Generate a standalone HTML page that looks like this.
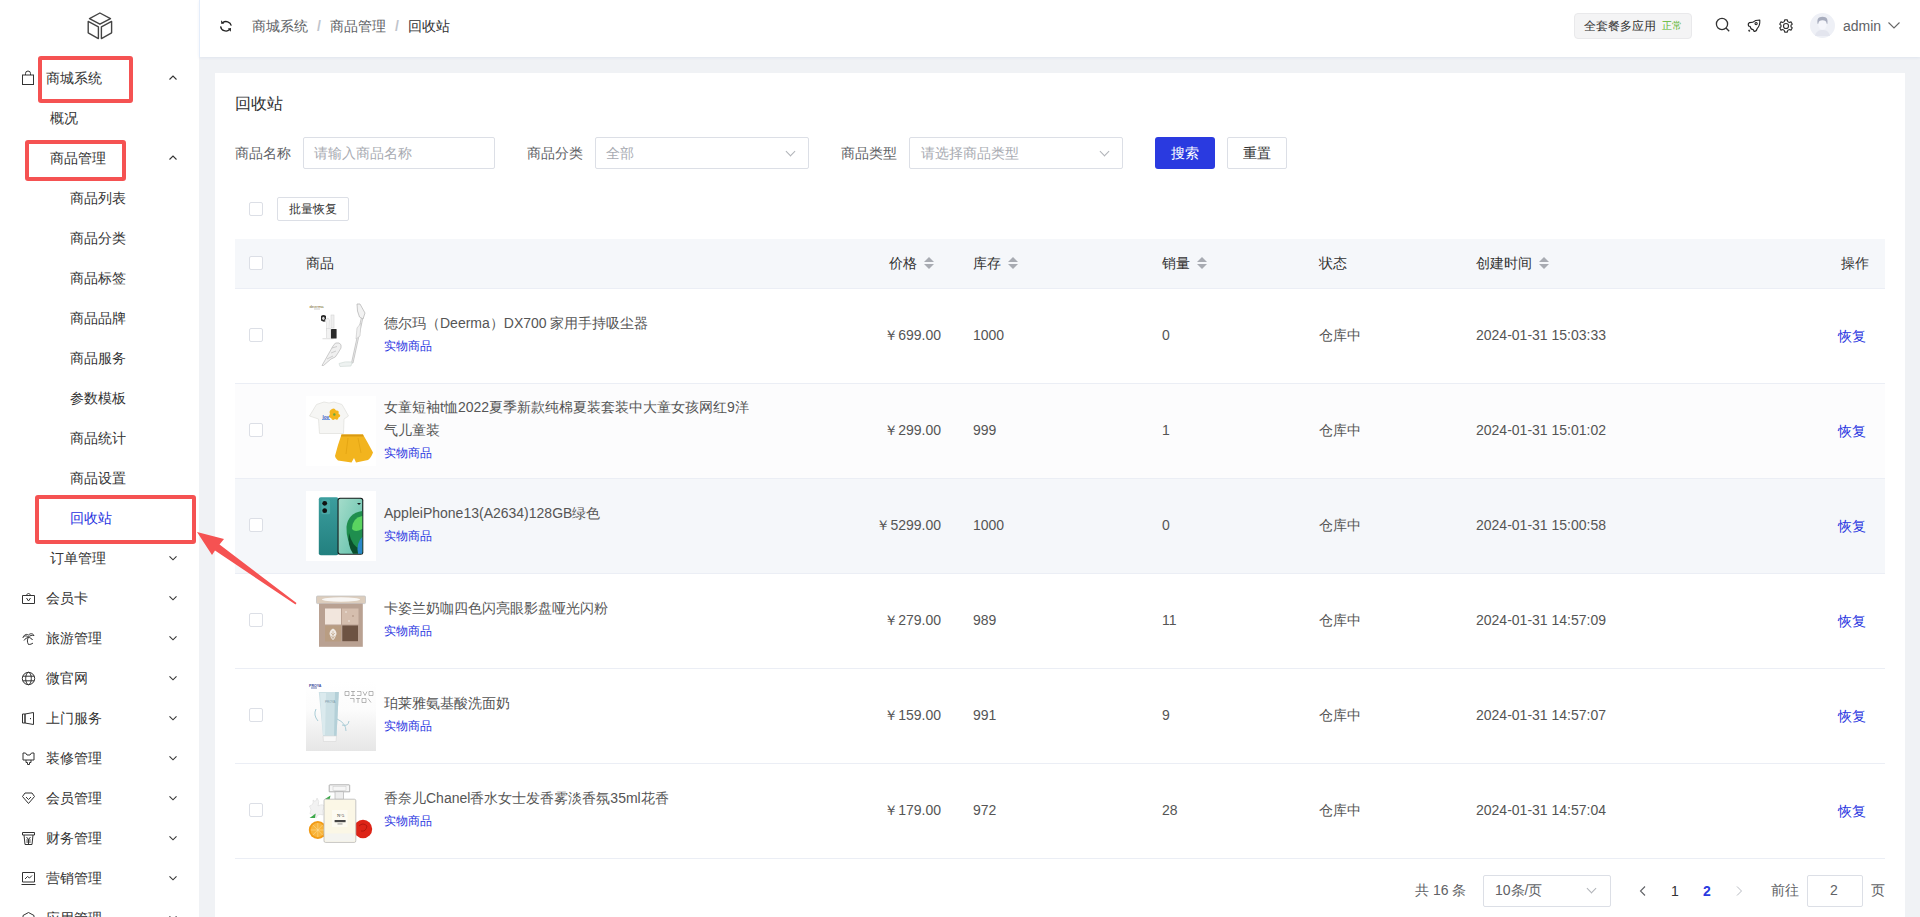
<!DOCTYPE html><html><head><meta charset="utf-8"><style>
*{box-sizing:border-box;margin:0;padding:0}
html,body{width:1920px;height:917px;overflow:hidden;background:#f0f2f5;font-family:"Liberation Sans",sans-serif;font-size:14px;color:#333}
#side{position:absolute;left:0;top:0;width:199px;height:917px;background:#fff}
.t{position:absolute;white-space:nowrap;line-height:20px;height:20px}
.chev{position:absolute;width:6px;height:6px;border-left:1px solid #555;border-top:1px solid #555}
.up{transform:rotate(45deg)}
.down{transform:rotate(225deg)}
#hdr{position:absolute;left:199px;top:0;width:1721px;height:57px;background:#fff;border-left:1px solid #e4edfa;box-shadow:0 1px 3px rgba(0,50,150,0.07)}
#card{position:absolute;left:215px;top:73px;width:1690px;height:860px;background:#fff}
.red{position:absolute;border:4px solid #f55252;border-radius:3px}
svg{position:absolute;overflow:visible}
.box{position:absolute;border:1px solid #dcdfe6;border-radius:2px;background:#fff}
.cb{position:absolute;width:14px;height:14px;border:1px solid #dcdfe6;border-radius:2px;background:#fff}
.row{position:absolute;left:235px;width:1650px}
.hl{position:absolute;left:235px;width:1650px;height:1px;background:#ebeef5}
.sel-ch{position:absolute;width:7px;height:7px;border-left:1px solid #b0b3b8;border-top:1px solid #b0b3b8;transform:rotate(225deg)}
.sort{position:absolute;width:10px;height:14px}
.sort:before{content:"";position:absolute;left:0;top:1px;border:5px solid transparent;border-bottom:5px solid #a8abb2;border-top:0}
.sort:after{content:"";position:absolute;left:0;top:8px;border:5px solid transparent;border-top:5px solid #a8abb2;border-bottom:0}
</style></head><body><div id="side"></div><svg style="left:82px;top:8px" width="36" height="36" viewBox="0 0 36 36"><g fill="none" stroke="#444" stroke-width="1.4" stroke-linejoin="round"><path d="M7.5 10.6 L17.9 5 L28.5 10.6 L17.9 16.2 Z"/><path d="M6.2 13.4 L16.4 18.9 V30.6 L6.2 24.8 Z"/><path d="M29.6 13.4 L19.4 18.9 V30.6 L29.6 24.8 Z"/></g></svg><div class="t" style="left:46px;top:68px;color:#333;font-size:14px;">商城系统</div><svg style="left:168px;top:74px" width="10" height="8" viewBox="0 0 10 8"><path d="M1.5 5.5 L5 2 L8.5 5.5" fill="none" stroke="#333" stroke-width="1.1"/></svg><svg style="left:21px;top:70px" width="14" height="16" viewBox="0 0 14 16"><g fill="none" stroke="#333" stroke-width="1"><rect x="1.5" y="5" width="11" height="9.5"/><path d="M4.5 5 V3.5 A2.5 2.5 0 0 1 9.5 3.5 V5"/></g></svg><div class="t" style="left:50px;top:108px;color:#333;font-size:14px;">概况</div><div class="t" style="left:50px;top:148px;color:#333;font-size:14px;">商品管理</div><svg style="left:168px;top:154px" width="10" height="8" viewBox="0 0 10 8"><path d="M1.5 5.5 L5 2 L8.5 5.5" fill="none" stroke="#333" stroke-width="1.1"/></svg><div class="t" style="left:70px;top:188px;color:#333;font-size:14px;">商品列表</div><div class="t" style="left:70px;top:228px;color:#333;font-size:14px;">商品分类</div><div class="t" style="left:70px;top:268px;color:#333;font-size:14px;">商品标签</div><div class="t" style="left:70px;top:308px;color:#333;font-size:14px;">商品品牌</div><div class="t" style="left:70px;top:348px;color:#333;font-size:14px;">商品服务</div><div class="t" style="left:70px;top:388px;color:#333;font-size:14px;">参数模板</div><div class="t" style="left:70px;top:428px;color:#333;font-size:14px;">商品统计</div><div class="t" style="left:70px;top:468px;color:#333;font-size:14px;">商品设置</div><div class="t" style="left:70px;top:508px;color:#1f33e0;font-size:14px;">回收站</div><div class="t" style="left:50px;top:548px;color:#333;font-size:14px;">订单管理</div><svg style="left:168px;top:554px" width="10" height="8" viewBox="0 0 10 8"><path d="M1.5 2.3 L5 5.8 L8.5 2.3" fill="none" stroke="#333" stroke-width="1.1"/></svg><div class="t" style="left:46px;top:588px;color:#333;font-size:14px;">会员卡</div><svg style="left:168px;top:594px" width="10" height="8" viewBox="0 0 10 8"><path d="M1.5 2.3 L5 5.8 L8.5 2.3" fill="none" stroke="#333" stroke-width="1.1"/></svg><div class="t" style="left:46px;top:628px;color:#333;font-size:14px;">旅游管理</div><svg style="left:168px;top:634px" width="10" height="8" viewBox="0 0 10 8"><path d="M1.5 2.3 L5 5.8 L8.5 2.3" fill="none" stroke="#333" stroke-width="1.1"/></svg><div class="t" style="left:46px;top:668px;color:#333;font-size:14px;">微官网</div><svg style="left:168px;top:674px" width="10" height="8" viewBox="0 0 10 8"><path d="M1.5 2.3 L5 5.8 L8.5 2.3" fill="none" stroke="#333" stroke-width="1.1"/></svg><div class="t" style="left:46px;top:708px;color:#333;font-size:14px;">上门服务</div><svg style="left:168px;top:714px" width="10" height="8" viewBox="0 0 10 8"><path d="M1.5 2.3 L5 5.8 L8.5 2.3" fill="none" stroke="#333" stroke-width="1.1"/></svg><div class="t" style="left:46px;top:748px;color:#333;font-size:14px;">装修管理</div><svg style="left:168px;top:754px" width="10" height="8" viewBox="0 0 10 8"><path d="M1.5 2.3 L5 5.8 L8.5 2.3" fill="none" stroke="#333" stroke-width="1.1"/></svg><div class="t" style="left:46px;top:788px;color:#333;font-size:14px;">会员管理</div><svg style="left:168px;top:794px" width="10" height="8" viewBox="0 0 10 8"><path d="M1.5 2.3 L5 5.8 L8.5 2.3" fill="none" stroke="#333" stroke-width="1.1"/></svg><div class="t" style="left:46px;top:828px;color:#333;font-size:14px;">财务管理</div><svg style="left:168px;top:834px" width="10" height="8" viewBox="0 0 10 8"><path d="M1.5 2.3 L5 5.8 L8.5 2.3" fill="none" stroke="#333" stroke-width="1.1"/></svg><div class="t" style="left:46px;top:868px;color:#333;font-size:14px;">营销管理</div><svg style="left:168px;top:874px" width="10" height="8" viewBox="0 0 10 8"><path d="M1.5 2.3 L5 5.8 L8.5 2.3" fill="none" stroke="#333" stroke-width="1.1"/></svg><div class="t" style="left:46px;top:908px;color:#333;font-size:14px;">应用管理</div><svg style="left:168px;top:914px" width="10" height="8" viewBox="0 0 10 8"><path d="M1.5 2.3 L5 5.8 L8.5 2.3" fill="none" stroke="#333" stroke-width="1.1"/></svg><svg style="left:20.5px;top:590.5px" width="15" height="15" viewBox="0 0 15 15"><g fill="none" stroke="#333" stroke-width="1" stroke-linejoin="round"><path d="M1.5 4.5 H13.5 V12.5 H1.5 Z M5 4.5 L7.5 2 L10 4.5 M5.5 7 L7.5 10 L9.5 7"/></g></svg><svg style="left:20.5px;top:630.5px" width="15" height="15" viewBox="0 0 15 15"><g fill="none" stroke="#333" stroke-width="1" stroke-linejoin="round"><path d="M7.5 6 C6 9 6 11 7.5 13.5 C9 13.5 11 13 12 12 M7.5 6 C5 4 3 5 2 6.5 C3 4 5 2.5 7.5 4 C9.5 2 12 2.5 13 4.5 C11 4 9 4.5 7.5 6 M7.5 6 C9 7 11 7.5 11.5 9 M7.5 6 C6 7 4 7.5 3 9.5"/></g></svg><svg style="left:20.5px;top:670.5px" width="15" height="15" viewBox="0 0 15 15"><g fill="none" stroke="#333" stroke-width="1" stroke-linejoin="round"><circle cx="7.5" cy="7.5" r="6.2"/><ellipse cx="7.5" cy="7.5" rx="2.8" ry="6.2"/><path d="M1.8 5.2 H13.2 M1.8 9.8 H13.2"/></g></svg><svg style="left:20.5px;top:710.5px" width="15" height="15" viewBox="0 0 15 15"><g fill="none" stroke="#333" stroke-width="1" stroke-linejoin="round"><path d="M4 3 L12.5 1.5 V13.5 L4 12 M4 3 H1.5 V12 H4 Z M4 3 V12 M9.5 7 V8.2"/></g></svg><svg style="left:20.5px;top:750.5px" width="15" height="15" viewBox="0 0 15 15"><g fill="none" stroke="#333" stroke-width="1" stroke-linejoin="round"><path d="M2 2 H4.5 L6 4 H9 L10.5 2 H13 V9 H2 Z M5 9 V11.5 H6.5 V13.5 H8.5 V11.5 H10 V9"/></g></svg><svg style="left:20.5px;top:790.5px" width="15" height="15" viewBox="0 0 15 15"><g fill="none" stroke="#333" stroke-width="1" stroke-linejoin="round"><path d="M4 2 H11 L13.5 5.5 L7.5 12.5 L1.5 5.5 Z M5 6 L7.5 8.5 L10 6"/></g></svg><svg style="left:20.5px;top:830.5px" width="15" height="15" viewBox="0 0 15 15"><g fill="none" stroke="#333" stroke-width="1" stroke-linejoin="round"><path d="M1.5 1.5 H13.5 V4 H1.5 Z M3 4 L4 13.5 H11 L12 4 M5.5 6 L7.5 8.5 L9.5 6 M5.3 9 H9.7 M5.3 11 H9.7 M7.5 8.5 V13"/></g></svg><svg style="left:20.5px;top:870.5px" width="15" height="15" viewBox="0 0 15 15"><g fill="none" stroke="#333" stroke-width="1" stroke-linejoin="round"><path d="M1.5 1.5 H13.5 V11 H1.5 Z M0.5 13.5 H14.5 M4 8 L6.5 5.5 L8.5 7 L11 4.5"/></g></svg><svg style="left:20.5px;top:910.5px" width="15" height="15" viewBox="0 0 15 15"><g fill="none" stroke="#333" stroke-width="1" stroke-linejoin="round"><path d="M7.5 1.5 L13 4.5 V10.5 L7.5 13.5 L2 10.5 V4.5 Z"/></g></svg><div id="hdr"></div><svg style="left:214px;top:14px" width="24" height="24" viewBox="0 0 24 24"><g fill="none" stroke="#222" stroke-width="1.3"><path d="M8.6 8.8 A5.4 5.4 0 0 1 17.3 11.6"/><path d="M6.6 12.3 A5.4 5.4 0 0 0 15.6 15.6"/></g><path d="M7 6.2 L7.3 9.9 L10.2 9.4 Z M17 14.1 L16.8 17.7 L13.9 14.5 Z" fill="#222"/></svg><div class="t" style="left:252px;top:16px;color:#606266;font-size:14px;">商城系统</div><div class="t" style="left:317px;top:16px;color:#c0c4cc;font-size:14px;font-weight:bold">/</div><div class="t" style="left:330px;top:16px;color:#606266;font-size:14px;">商品管理</div><div class="t" style="left:395px;top:16px;color:#c0c4cc;font-size:14px;font-weight:bold">/</div><div class="t" style="left:408px;top:16px;color:#303133;font-size:14px;">回收站</div><div style="position:absolute;left:1574px;top:13px;width:118px;height:26px;background:#f4f4f5;border:1px solid #e9e9eb;border-radius:4px"></div><div class="t" style="left:1584px;top:16px;color:#333;font-size:12px;">全套餐多应用</div><div class="t" style="left:1662px;top:16px;color:#58b52a;font-size:10px;">正常</div><svg style="left:1715px;top:17px" width="16" height="16" viewBox="0 0 16 16"><g fill="none" stroke="#333" stroke-width="1.3"><circle cx="7" cy="7" r="5.6"/><path d="M11 11 L14.2 14.2"/></g></svg><svg style="left:1740px;top:12px" width="30" height="28" viewBox="0 0 30 28"><g fill="none" stroke="#222" stroke-width="1.1" stroke-linejoin="round"><path d="M19.8 8 C17 8 14.5 8.6 12.6 10.3 L9.6 10.6 C8.4 11.2 8.1 12.8 8.5 13.9 L10.2 14.6 C10.4 16.4 11.6 17.4 13.4 17.7 L14 19.4 C15.5 19.5 16.8 18.2 17.1 16.6 C19.2 14.6 20 11.2 19.8 8 Z"/><circle cx="16.1" cy="11.6" r="1.1"/><path d="M8.2 18.6 L10.2 18.8 M9.2 17.6 L9.3 19.8" stroke-width="0.8"/></g></svg><svg style="left:1779px;top:19px" width="14" height="14" viewBox="0 0 16 16"><g fill="none" stroke="#333" stroke-width="1.3" stroke-linejoin="round"><path d="M6.5 1 H9.5 L10 3 L11.8 4 L13.7 3.3 L15.2 5.9 L13.7 7.2 V8.8 L15.2 10.1 L13.7 12.7 L11.8 12 L10 13 L9.5 15 H6.5 L6 13 L4.2 12 L2.3 12.7 L0.8 10.1 L2.3 8.8 V7.2 L0.8 5.9 L2.3 3.3 L4.2 4 L6 3 Z"/><circle cx="8" cy="8" r="2.9"/></g></svg><svg style="left:1810px;top:13px" width="25" height="25" viewBox="0 0 25 25"><circle cx="12.5" cy="12.5" r="12.5" fill="#eef0f6"/><path d="M5 23 C6 18 9 17 12.5 17 C16 17 19 18 20 23 Z" fill="#e3e5ee"/><ellipse cx="12.5" cy="11.5" rx="4.2" ry="5.2" fill="#f5f6fb"/><path d="M7.6 11 C7 6 8 4 12.5 3.8 C17 4 18 6 17.4 11 L16.6 10.5 C16.5 8 15 7.3 12.5 7.3 C10 7.3 8.5 8 8.4 10.5 Z" fill="#a7acbd"/></svg><div class="t" style="left:1843px;top:16px;color:#606266;font-size:14px;">admin</div><svg style="left:1888px;top:22px" width="12" height="7" viewBox="0 0 12 7"><path d="M0.5 0.5 L6 6 L11.5 0.5" fill="none" stroke="#666" stroke-width="1.1"/></svg><div id="card"></div><div class="t" style="left:235px;top:94px;color:#303133;font-size:16px;">回收站</div><div class="t" style="left:235px;top:143px;color:#606266;font-size:14px;">商品名称</div><div class="box" style="left:303px;top:137px;width:192px;height:32px"></div><div class="t" style="left:314px;top:143px;color:#a8abb2;font-size:14px;">请输入商品名称</div><div class="t" style="left:527px;top:143px;color:#606266;font-size:14px;">商品分类</div><div class="box" style="left:595px;top:137px;width:214px;height:32px"></div><div class="t" style="left:606px;top:143px;color:#a8abb2;font-size:14px;">全部</div><div class="sel-ch" style="left:787px;top:148px"></div><div class="t" style="left:841px;top:143px;color:#606266;font-size:14px;">商品类型</div><div class="box" style="left:909px;top:137px;width:214px;height:32px"></div><div class="t" style="left:921px;top:143px;color:#a8abb2;font-size:14px;">请选择商品类型</div><div class="sel-ch" style="left:1101px;top:148px"></div><div style="position:absolute;left:1155px;top:137px;width:60px;height:32px;background:#2a3ae0;border-radius:3px"></div><div class="t" style="left:1171px;top:143px;color:#fff;font-size:14px;">搜索</div><div class="box" style="left:1227px;top:137px;width:60px;height:32px"></div><div class="t" style="left:1243px;top:143px;color:#333;font-size:14px;">重置</div><div class="cb" style="left:249px;top:202px"></div><div class="box" style="left:277px;top:197px;width:72px;height:24px"></div><div class="t" style="left:289px;top:199px;color:#333;font-size:12px;">批量恢复</div><div style="position:absolute;left:235px;top:239px;width:1650px;height:50px;background:#f5f7fa;border-bottom:1px solid #ebeef5"></div><div class="cb" style="left:249px;top:256px"></div><div class="t" style="left:306px;top:253px;color:#333;font-size:14px;">商品</div><div class="t" style="left:889px;top:253px;color:#333;font-size:14px;">价格</div><div class="sort" style="left:924px;top:256px"></div><div class="t" style="left:973px;top:253px;color:#333;font-size:14px;">库存</div><div class="sort" style="left:1008px;top:256px"></div><div class="t" style="left:1162px;top:253px;color:#333;font-size:14px;">销量</div><div class="sort" style="left:1197px;top:256px"></div><div class="t" style="left:1319px;top:253px;color:#333;font-size:14px;">状态</div><div class="t" style="left:1476px;top:253px;color:#333;font-size:14px;">创建时间</div><div class="sort" style="left:1539px;top:256px"></div><div class="t" style="left:1469px;width:400px;text-align:right;top:253px;color:#333;font-size:14px;">操作</div><div class="row" style="top:289px;height:94px;background:#fff"></div><div class="hl" style="top:383px"></div><div class="cb" style="left:249px;top:328px"></div><div style="position:absolute;left:306px;top:301px;width:70px;height:70px;background:#fff;overflow:hidden"><svg width="70" height="70" viewBox="0 0 70 70" style="left:0;top:0">
<text x="3.5" y="6.5" font-size="4.2" fill="#7a6a30" font-family="Liberation Sans">deerma</text>
<rect x="8" y="7.5" width="6" height="1" fill="#ccc"/>
<path d="M15 15 Q17.5 13 20 15 L20 20 Q17.5 21.5 15 19.5 Z" fill="#2a2a2a"/>
<ellipse cx="17.4" cy="17.3" rx="1.2" ry="1.6" fill="#ddd"/>
<path d="M19 19 L22 17 L23.5 19 L23 30 L20.5 30 L20.5 22 Z" fill="#f4f4f4" stroke="#d8d8d8" stroke-width="0.6"/>
<rect x="25" y="14" width="3" height="13" fill="#efefef" stroke="#d4d4d4" stroke-width="0.6"/>
<rect x="20.5" y="27.5" width="4" height="10" fill="#f2f2f2" stroke="#d6d6d6" stroke-width="0.6"/>
<rect x="16.5" y="37" width="11" height="1.3" fill="#e4e4e4"/>
<rect x="25" y="28" width="5.6" height="9.6" rx="0.6" fill="#2a2a2a"/>
<path d="M16 64.5 L27 45 Q29 40.5 33 42 Q36 43 35 47 L32 52 Q30 57 25 58 L17.5 64.5 Z" fill="#f0f0f0" stroke="#b8b8b8" stroke-width="0.7"/>
<path d="M26 47 L31 45.5 M25 52 L30 50 M21 58 L27 55" stroke="#bdbdbd" stroke-width="0.7"/>
<path d="M55.5 16 L57 16.5 L47 62 L45.5 62 Z" fill="#ececec" stroke="#b8b8b8" stroke-width="0.7"/>
<path d="M51 3 L54 3 L59 12 L57 18 L53.5 16 L51.5 10 Z" fill="#f2f2f2" stroke="#b0b0b0" stroke-width="0.7"/>
<path d="M51 27 L55 22 L54 35 L50 38 Z" fill="#f0f0f0" stroke="#c4c4c4" stroke-width="0.6"/>
<path d="M33 62.5 Q39 60 46 61 L45 65 L34 65.5 Z" fill="#eef2f1" stroke="#cdd6d4" stroke-width="0.6"/>
</svg></div><div class="t" style="left:384px;top:313px;color:#555;font-size:14px;">德尔玛（Deerma）DX700 家用手持吸尘器</div><div class="t" style="left:384px;top:336px;color:#1f33e0;font-size:12px;">实物商品</div><div class="t" style="left:541px;width:400px;text-align:right;top:325px;color:#555;font-size:14px;">￥699.00</div><div class="t" style="left:973px;top:325px;color:#555;font-size:14px;">1000</div><div class="t" style="left:1162px;top:325px;color:#555;font-size:14px;">0</div><div class="t" style="left:1319px;top:325px;color:#555;font-size:14px;">仓库中</div><div class="t" style="left:1476px;top:325px;color:#555;font-size:14px;">2024-01-31 15:03:33</div><div class="t" style="left:1838px;top:326px;color:#1f33e0;font-size:14px;">恢复</div><div class="row" style="top:384px;height:94px;background:#fcfcfd"></div><div class="hl" style="top:478px"></div><div class="cb" style="left:249px;top:423px"></div><div style="position:absolute;left:306px;top:396px;width:70px;height:70px;background:#fff;overflow:hidden"><svg width="70" height="70" viewBox="0 0 70 70" style="left:0;top:0">
<path d="M18 6 Q23 8 28 6 L36 8.5 L42.5 20 L38 23 L37.5 37.5 L13.5 37.5 L12.5 23 L3.5 20 L10.5 8.5 Z" fill="#f6f6f4" stroke="#e2e2de" stroke-width="0.8"/>
<path d="M26 13 Q28.5 11.5 30 14.5 Q33.5 14 32.5 17.5 Q36 20 32.5 21.5 Q32 25 29 23 Q26.5 25.5 25 22 Q21.5 21 24 18 Q22.5 14.5 26 13 Z" fill="#f3b51c"/>
<circle cx="28.3" cy="18.5" r="1.2" fill="#6aa840"/>
<text x="16.5" y="22.5" font-size="4.6" fill="#3650c0" font-family="Liberation Sans" font-weight="bold">lov</text>
<rect x="16" y="23" width="8" height="1" fill="#7aa0e0"/>
<path d="M35.5 38.5 L57 38.5 Q62 47 67 56.5 Q65 62 62 64 L50 66.5 L48 62 L45.5 66.5 L32 64.5 Q29 62 29 60 Q32 48 35.5 38.5 Z" fill="#f2b41e"/>
<path d="M35.5 38.5 L57 38.5 L57.5 40.5 L35 40.5 Z" fill="#d99a12"/>
<path d="M42 42 L40 58 M52 42 L55 57" stroke="#e0a010" stroke-width="0.7"/>
</svg></div><div class="t" style="left:384px;top:397px;color:#555;font-size:14px;">女童短袖t恤2022夏季新款纯棉夏装套装中大童女孩网红9洋</div><div class="t" style="left:384px;top:420px;color:#555;font-size:14px;">气儿童装</div><div class="t" style="left:384px;top:443px;color:#1f33e0;font-size:12px;">实物商品</div><div class="t" style="left:541px;width:400px;text-align:right;top:420px;color:#555;font-size:14px;">￥299.00</div><div class="t" style="left:973px;top:420px;color:#555;font-size:14px;">999</div><div class="t" style="left:1162px;top:420px;color:#555;font-size:14px;">1</div><div class="t" style="left:1319px;top:420px;color:#555;font-size:14px;">仓库中</div><div class="t" style="left:1476px;top:420px;color:#555;font-size:14px;">2024-01-31 15:01:02</div><div class="t" style="left:1838px;top:421px;color:#1f33e0;font-size:14px;">恢复</div><div class="row" style="top:479px;height:94px;background:#f5f7fa"></div><div class="hl" style="top:573px"></div><div class="cb" style="left:249px;top:518px"></div><div style="position:absolute;left:306px;top:491px;width:70px;height:70px;background:#fff;overflow:hidden"><svg width="70" height="70" viewBox="0 0 70 70" style="left:0;top:0">
<defs><linearGradient id="pb" x1="0" y1="0" x2="0" y2="1"><stop offset="0" stop-color="#3c9e9e"/><stop offset="1" stop-color="#22807f"/></linearGradient>
<linearGradient id="ps" x1="0" y1="0" x2="1" y2="1"><stop offset="0" stop-color="#a4dcca"/><stop offset="1" stop-color="#60c0aa"/></linearGradient></defs>
<rect x="12.8" y="6.2" width="19.6" height="58" rx="2" fill="url(#pb)"/>
<rect x="15.4" y="8.4" width="8.7" height="14.8" rx="1.5" fill="#4aa8a6"/>
<circle cx="18.7" cy="12.3" r="2.4" fill="#111"/>
<circle cx="18.7" cy="19.7" r="2.4" fill="#111"/>
<rect x="31.5" y="6.7" width="25.8" height="57.1" rx="2.5" fill="#151a1a"/>
<rect x="32.6" y="7.8" width="23.6" height="54.9" rx="1.8" fill="url(#ps)"/>
<path d="M56.2 20 Q42 22 40.5 36 Q40 50 48 60 L56.2 62 Z" fill="#1f8e4e"/>
<path d="M56.2 25 Q46 27 46 38 Q49 42 56.2 38 Z" fill="#5ad460"/>
<path d="M43 42 Q46 55 54 58 L56.2 62.7 L47 62.7 Q41 54 43 42 Z" fill="#0b4f2c"/>
<path d="M56.2 46 Q50 52 52 62.7 L56.2 62.7 Z" fill="#2a88c8"/>
<path d="M51 12 L55 12 L53 14 Z" fill="#151a1a"/>
</svg></div><div class="t" style="left:384px;top:503px;color:#555;font-size:14px;">AppleiPhone13(A2634)128GB绿色</div><div class="t" style="left:384px;top:526px;color:#1f33e0;font-size:12px;">实物商品</div><div class="t" style="left:541px;width:400px;text-align:right;top:515px;color:#555;font-size:14px;">￥5299.00</div><div class="t" style="left:973px;top:515px;color:#555;font-size:14px;">1000</div><div class="t" style="left:1162px;top:515px;color:#555;font-size:14px;">0</div><div class="t" style="left:1319px;top:515px;color:#555;font-size:14px;">仓库中</div><div class="t" style="left:1476px;top:515px;color:#555;font-size:14px;">2024-01-31 15:00:58</div><div class="t" style="left:1838px;top:516px;color:#1f33e0;font-size:14px;">恢复</div><div class="row" style="top:574px;height:94px;background:#fff"></div><div class="hl" style="top:668px"></div><div class="cb" style="left:249px;top:613px"></div><div style="position:absolute;left:306px;top:586px;width:70px;height:70px;background:#fff;overflow:hidden"><svg width="70" height="70" viewBox="0 0 70 70" style="left:0;top:0">
<rect x="10.5" y="10" width="49" height="7.6" rx="1" fill="#dccdbd" stroke="#c4c4c4" stroke-width="0.8"/>
<ellipse cx="35" cy="13.5" rx="19" ry="2.2" fill="#f8f6f4"/>
<rect x="13" y="17.6" width="43.8" height="43.2" fill="#b9a192"/>
<rect x="19" y="22.5" width="16" height="16" fill="#f2e6dd"/>
<rect x="36" y="22.5" width="16.5" height="16" fill="#d5beae"/>
<circle cx="40" cy="26" r="0.8" fill="#f4ece6"/><circle cx="47" cy="30" r="0.8" fill="#a88c7a"/><circle cx="43" cy="35" r="0.8" fill="#f4ece6"/>
<rect x="19" y="39.5" width="16" height="16" fill="#b99d82"/>
<path d="M27 42.5 Q30.5 44 30.5 48 Q29 53 27 54 Q25 53 23.5 48 Q23.5 44 27 42.5 Z" fill="#efe9e2"/>
<path d="M27 45 L27 53 M25 47 L27 49 L29 47 M24.5 50 L27 52 L29.5 50" stroke="#b99d82" stroke-width="0.6" fill="none"/>
<rect x="36.3" y="39.5" width="15.7" height="15.7" fill="#6d5343"/>
</svg></div><div class="t" style="left:384px;top:598px;color:#555;font-size:14px;">卡姿兰奶咖四色闪亮眼影盘哑光闪粉</div><div class="t" style="left:384px;top:621px;color:#1f33e0;font-size:12px;">实物商品</div><div class="t" style="left:541px;width:400px;text-align:right;top:610px;color:#555;font-size:14px;">￥279.00</div><div class="t" style="left:973px;top:610px;color:#555;font-size:14px;">989</div><div class="t" style="left:1162px;top:610px;color:#555;font-size:14px;">11</div><div class="t" style="left:1319px;top:610px;color:#555;font-size:14px;">仓库中</div><div class="t" style="left:1476px;top:610px;color:#555;font-size:14px;">2024-01-31 14:57:09</div><div class="t" style="left:1838px;top:611px;color:#1f33e0;font-size:14px;">恢复</div><div class="row" style="top:669px;height:94px;background:#fff"></div><div class="hl" style="top:763px"></div><div class="cb" style="left:249px;top:708px"></div><div style="position:absolute;left:306px;top:681px;width:70px;height:70px;background:#fff;overflow:hidden"><svg width="70" height="70" viewBox="0 0 70 70" style="left:0;top:0">
<defs><linearGradient id="fw" x1="0" y1="0" x2="0" y2="1"><stop offset="0" stop-color="#ffffff"/><stop offset="0.4" stop-color="#fcfcfc"/><stop offset="1" stop-color="#e6e6e6"/></linearGradient></defs>
<rect x="0" y="0" width="70" height="70" fill="url(#fw)"/>
<text x="3" y="5.5" font-size="3.6" fill="#3a4a9a" font-family="Liberation Sans" font-weight="bold">PROYA</text>
<rect x="5" y="6.5" width="6" height="1" fill="#6a78b0"/>
<g fill="none" stroke="#8a8a8a" stroke-width="0.6"><path d="M39 10.5 h4 v4 h-4 z M45 10.5 h4 M47 10 v5 M45 14.5 h4 M51 10.5 h4 v4 h-4 M57 10.5 l2 4 l2 -4 M63 10.5 h4 v4 h-4 z"/><path d="M44 17.5 h4 v4 M50 17.5 h4 M52 17 v5 M56 17.5 h4 v4 h-4 z M62 17.5 l3 4"/></g>
<path d="M12.8 11 L32.8 11 L30.5 55 L17 55 Z" fill="#cce0e5"/>
<path d="M14 12 L20 12 L19 54 L17 54 Z" fill="#dbeaee"/><path d="M29 11 L32.8 11 L30.5 55 L28 55 Z" fill="#b4d0d8"/><text x="19" y="22" font-size="3" fill="#7a9aa8" font-family="Liberation Sans">PROYA</text>
<path d="M17 55 L30.5 55 L30 60.5 L17.5 60.5 Z" fill="#f8f8f8" stroke="#d8d8d8" stroke-width="0.6"/>
<path d="M31 38 Q40 42 40 50 M36 44 Q42 46 43 40 M10 28 Q7 34 12 40" fill="none" stroke="#a9ccd6" stroke-width="1"/>
</svg></div><div class="t" style="left:384px;top:693px;color:#555;font-size:14px;">珀莱雅氨基酸洗面奶</div><div class="t" style="left:384px;top:716px;color:#1f33e0;font-size:12px;">实物商品</div><div class="t" style="left:541px;width:400px;text-align:right;top:705px;color:#555;font-size:14px;">￥159.00</div><div class="t" style="left:973px;top:705px;color:#555;font-size:14px;">991</div><div class="t" style="left:1162px;top:705px;color:#555;font-size:14px;">9</div><div class="t" style="left:1319px;top:705px;color:#555;font-size:14px;">仓库中</div><div class="t" style="left:1476px;top:705px;color:#555;font-size:14px;">2024-01-31 14:57:07</div><div class="t" style="left:1838px;top:706px;color:#1f33e0;font-size:14px;">恢复</div><div class="row" style="top:764px;height:94px;background:#fff"></div><div class="hl" style="top:858px"></div><div class="cb" style="left:249px;top:803px"></div><div style="position:absolute;left:306px;top:776px;width:70px;height:70px;background:#fff;overflow:hidden"><svg width="70" height="70" viewBox="0 0 70 70" style="left:0;top:0">
<path d="M11 22 Q14 25 12 30 Q17 27 19 31 Q15 34 17 39 Q12 37 10 42 Q8 37 4 38 Q6 33 3.5 30 Q8 29 7 24 Q10 27 11 22 Z" fill="#f2f2f2" stroke="#d6d6d6" stroke-width="0.5"/>
<path d="M19 23 L24.5 19.5 L23.5 24 Z" fill="#3da84a"/>
<path d="M3.6 42 L9.7 37.6 L9 42 Z" fill="#3da84a"/>
<circle cx="11.8" cy="54" r="9" fill="#f29a14"/>
<circle cx="11.8" cy="54" r="7.2" fill="#f9b43a"/>
<path d="M11.8 47 V61 M4.8 54 H18.8 M7 49 L16.6 59 M16.6 49 L7 59" stroke="#fde0a0" stroke-width="0.5"/>
<circle cx="57" cy="53" r="9.2" fill="#dd2417"/>
<path d="M53 50 Q57 46 61 50 Q60 56 55 55" fill="none" stroke="#a8140c" stroke-width="0.8"/>
<path d="M23.2 9.5 Q23.2 8.8 24 8.8 H43 Q43.7 8.8 43.7 9.5 V15.8 H23.2 Z" fill="#f6f6f6" stroke="#9e9e9e" stroke-width="0.8"/>
<rect x="27" y="10.5" width="13" height="4" fill="none" stroke="#c8c8c8" stroke-width="0.5"/>
<rect x="29" y="15.8" width="8.6" height="7.4" fill="#eeeeee" stroke="#aaa" stroke-width="0.6"/>
<rect x="18" y="23.2" width="31.8" height="43.2" rx="1.5" fill="#fbf7e6" stroke="#b8b8b8" stroke-width="0.8"/>
<rect x="19.5" y="57.5" width="28.8" height="8" fill="#f4f4f0"/>
<rect x="26" y="34" width="15.5" height="17" fill="#fdfbf2"/>
<text x="31" y="40.5" font-size="4.5" fill="#222" font-family="Liberation Serif">N°5</text>
<rect x="28.6" y="44" width="11" height="2.2" fill="#444"/>
<rect x="31.5" y="47.5" width="5" height="0.9" fill="#888"/>
</svg></div><div class="t" style="left:384px;top:788px;color:#555;font-size:14px;">香奈儿Chanel香水女士发香雾淡香氛35ml花香</div><div class="t" style="left:384px;top:811px;color:#1f33e0;font-size:12px;">实物商品</div><div class="t" style="left:541px;width:400px;text-align:right;top:800px;color:#555;font-size:14px;">￥179.00</div><div class="t" style="left:973px;top:800px;color:#555;font-size:14px;">972</div><div class="t" style="left:1162px;top:800px;color:#555;font-size:14px;">28</div><div class="t" style="left:1319px;top:800px;color:#555;font-size:14px;">仓库中</div><div class="t" style="left:1476px;top:800px;color:#555;font-size:14px;">2024-01-31 14:57:04</div><div class="t" style="left:1838px;top:801px;color:#1f33e0;font-size:14px;">恢复</div><div class="t" style="left:1415px;top:880px;color:#606266;font-size:14px;">共 16 条</div><div class="box" style="left:1483px;top:875px;width:128px;height:32px"></div><div class="t" style="left:1495px;top:880px;color:#606266;font-size:14px;">10条/页</div><div class="sel-ch" style="left:1588px;top:885px"></div><svg style="left:1639px;top:886px" width="7" height="10" viewBox="0 0 7 10"><path d="M6 0.5 L1.5 5 L6 9.5" fill="none" stroke="#606266" stroke-width="1.1"/></svg><div class="t" style="left:1671px;top:881px;color:#333;font-size:14px;">1</div><div class="t" style="left:1703px;top:881px;color:#2a3ae0;font-size:14px;font-weight:bold">2</div><svg style="left:1736px;top:886px" width="7" height="10" viewBox="0 0 7 10"><path d="M1 0.5 L5.5 5 L1 9.5" fill="none" stroke="#b8bbc2" stroke-width="1"/></svg><div class="t" style="left:1771px;top:880px;color:#606266;font-size:14px;">前往</div><div class="box" style="left:1807px;top:875px;width:56px;height:32px"></div><div class="t" style="left:1830px;top:880px;color:#606266;font-size:14px;">2</div><div class="t" style="left:1871px;top:880px;color:#606266;font-size:14px;">页</div><div class="red" style="left:38px;top:56px;width:95px;height:47px"></div><div class="red" style="left:25px;top:140px;width:101px;height:41px"></div><div class="red" style="left:35px;top:495px;width:161px;height:49px"></div><svg style="left:0;top:0" width="1920" height="917"><polygon points="197,532 224,539 219.5,544.5 296.5,603 295.5,604.5 215,550.5 212,555" fill="#f55252"/></svg></body></html>
